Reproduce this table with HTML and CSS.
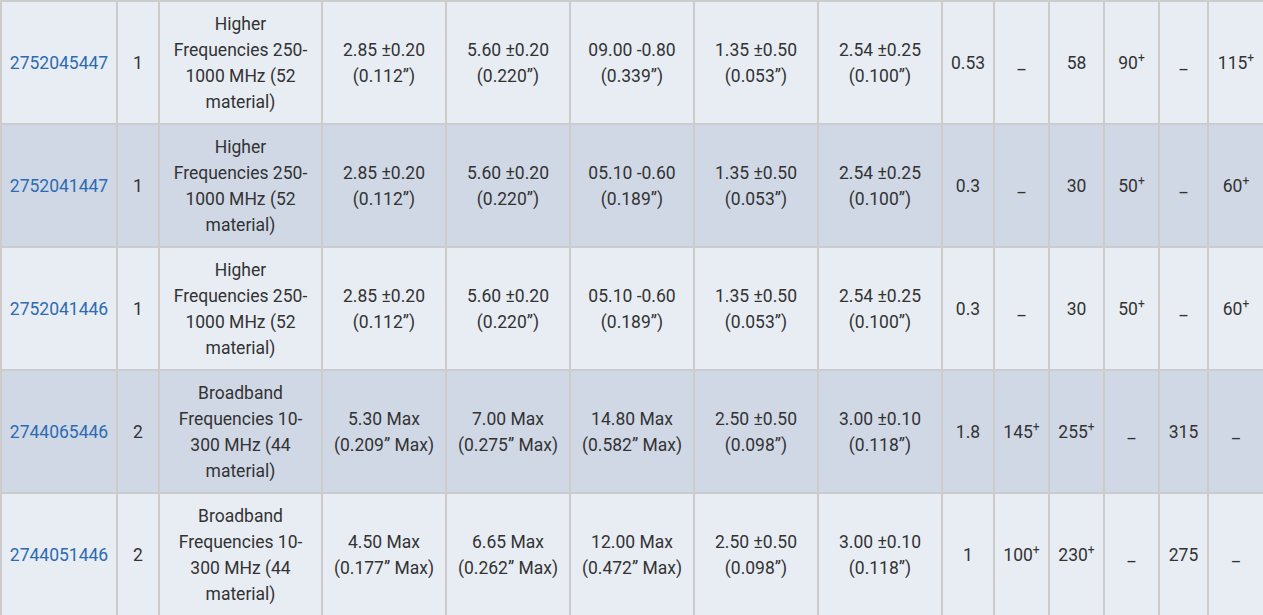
FILE: index.html
```html
<!DOCTYPE html>
<html lang="en">
<head>
<meta charset="utf-8">
<title>Ferrite cores</title>
<link rel="stylesheet" href="styles.css">
</head>
<body>
<table class="spec">
  <colgroup>
    <col class="c-part"><col class="c-type"><col class="c-desc">
    <col class="c-dim"><col class="c-dim"><col class="c-dim"><col class="c-dim"><col class="c-dim">
    <col class="c-wt"><col class="c-n"><col class="c-n"><col class="c-n"><col class="c-n2"><col class="c-n3">
  </colgroup>
  <tbody>
    <tr class="light">
      <td><a href="#">2752045447</a></td>
      <td>1</td>
      <td>Higher Frequencies 250-1000 MHz (52 material)</td>
      <td>2.85 ±0.20<br>(0.112”)</td>
      <td>5.60 ±0.20<br>(0.220”)</td>
      <td>09.00 -0.80<br>(0.339”)</td>
      <td>1.35 ±0.50<br>(0.053”)</td>
      <td>2.54 ±0.25<br>(0.100”)</td>
      <td>0.53</td>
      <td>_</td>
      <td>58</td>
      <td>90<sup>+</sup></td>
      <td>_</td>
      <td>115<sup>+</sup></td>
    </tr>
    <tr class="dark">
      <td><a href="#">2752041447</a></td>
      <td>1</td>
      <td>Higher Frequencies 250-1000 MHz (52 material)</td>
      <td>2.85 ±0.20<br>(0.112”)</td>
      <td>5.60 ±0.20<br>(0.220”)</td>
      <td>05.10 -0.60<br>(0.189”)</td>
      <td>1.35 ±0.50<br>(0.053”)</td>
      <td>2.54 ±0.25<br>(0.100”)</td>
      <td>0.3</td>
      <td>_</td>
      <td>30</td>
      <td>50<sup>+</sup></td>
      <td>_</td>
      <td>60<sup>+</sup></td>
    </tr>
    <tr class="light">
      <td><a href="#">2752041446</a></td>
      <td>1</td>
      <td>Higher Frequencies 250-1000 MHz (52 material)</td>
      <td>2.85 ±0.20<br>(0.112”)</td>
      <td>5.60 ±0.20<br>(0.220”)</td>
      <td>05.10 -0.60<br>(0.189”)</td>
      <td>1.35 ±0.50<br>(0.053”)</td>
      <td>2.54 ±0.25<br>(0.100”)</td>
      <td>0.3</td>
      <td>_</td>
      <td>30</td>
      <td>50<sup>+</sup></td>
      <td>_</td>
      <td>60<sup>+</sup></td>
    </tr>
    <tr class="dark">
      <td><a href="#">2744065446</a></td>
      <td>2</td>
      <td>Broadband Frequencies 10-300 MHz (44 material)</td>
      <td>5.30 Max<br>(0.209” Max)</td>
      <td>7.00 Max<br>(0.275” Max)</td>
      <td>14.80 Max<br>(0.582” Max)</td>
      <td>2.50 ±0.50<br>(0.098”)</td>
      <td>3.00 ±0.10<br>(0.118”)</td>
      <td>1.8</td>
      <td>145<sup>+</sup></td>
      <td>255<sup>+</sup></td>
      <td>_</td>
      <td>315</td>
      <td>_</td>
    </tr>
    <tr class="light">
      <td><a href="#">2744051446</a></td>
      <td>2</td>
      <td>Broadband Frequencies 10-300 MHz (44 material)</td>
      <td>4.50 Max<br>(0.177” Max)</td>
      <td>6.65 Max<br>(0.262” Max)</td>
      <td>12.00 Max<br>(0.472” Max)</td>
      <td>2.50 ±0.50<br>(0.098”)</td>
      <td>3.00 ±0.10<br>(0.118”)</td>
      <td>1</td>
      <td>100<sup>+</sup></td>
      <td>230<sup>+</sup></td>
      <td>_</td>
      <td>275</td>
      <td>_</td>
    </tr>
  </tbody>
</table>
</body>
</html>
```

FILE: styles.css
```css
html, body {
  margin: 0;
  padding: 0;
  overflow: hidden;
  background: #ffffff;
}

.spec {
  table-layout: fixed;
  width: 1265px;
  border-collapse: separate;
  border-spacing: 2px;
  background: #cccccc;
  font-family: Roboto, "Liberation Sans", Arial, sans-serif;
  font-size: 17.5px;
  line-height: 26px;
  color: #333333;
}

.c-part { width: 114px; }
.c-type { width: 40px; }
.c-desc { width: 161px; }
.c-dim  { width: 122px; }
.c-wt   { width: 50px; }
.c-n    { width: 53px; }
.c-n2   { width: 47px; }
.c-n3   { width: 54px; }

.spec td {
  padding: 9px 6px 8px;
  height: 104px;
  text-align: center;
  vertical-align: middle;
  box-sizing: content-box;
}

.spec tr.light td { background: #e8edf4; }
.spec tr.dark td { background: #d0d8e6; }

.spec a {
  color: #2e6bb1;
  text-decoration: none;
}

.spec sup {
  font-size: 12px;
  line-height: 0;
  vertical-align: 0;
  position: relative;
  top: -7px;
}
```
